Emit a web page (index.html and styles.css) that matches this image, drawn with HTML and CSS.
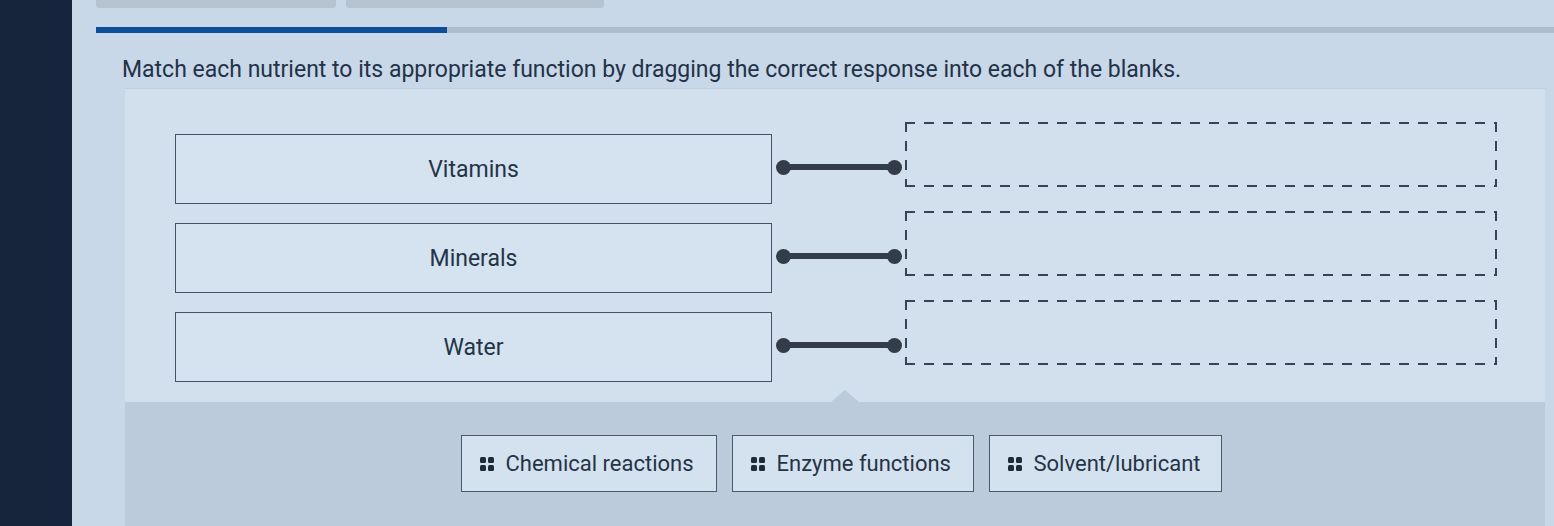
FILE: index.html
```html
<!DOCTYPE html>
<html lang="en">
<head>
<meta charset="utf-8">
<title>Match nutrients</title>
<link rel="stylesheet" href="styles.css">
</head>
<body>
<div class="app">
  <aside class="sidebar"></aside>
  <main class="main">
    <div class="tabs">
      <div class="tab tab-a"></div>
      <div class="tab tab-b"></div>
    </div>
    <div class="progress"><div class="progress-fill"></div></div>
    <p class="prompt">Match each nutrient to its appropriate function by dragging the correct response into each of the blanks.</p>
    <section class="panel">
      <div class="pairs">
        <div class="pair">
          <div class="term">Vitamins</div>
          <div class="link"><span class="dot"></span><span class="bar"></span><span class="dot"></span></div>
          <div class="drop"></div>
        </div>
        <div class="pair">
          <div class="term">Minerals</div>
          <div class="link"><span class="dot"></span><span class="bar"></span><span class="dot"></span></div>
          <div class="drop"></div>
        </div>
        <div class="pair">
          <div class="term">Water</div>
          <div class="link"><span class="dot"></span><span class="bar"></span><span class="dot"></span></div>
          <div class="drop"></div>
        </div>
      </div>
      <div class="bank">
        <span class="pointer"></span>
        <div class="chip"><span class="grip"><i></i><i></i><i></i><i></i></span>Chemical reactions</div>
        <div class="chip"><span class="grip"><i></i><i></i><i></i><i></i></span>Enzyme functions</div>
        <div class="chip"><span class="grip"><i></i><i></i><i></i><i></i></span>Solvent/lubricant</div>
      </div>
    </section>
  </main>
</div>
</body>
</html>
```

FILE: styles.css
```css
* { box-sizing: border-box; }
html, body {
  margin: 0;
  height: 100%;
  overflow: hidden;
}
body {
  background: #c8d8e9;
  font-family: Roboto, "Liberation Sans", Arial, sans-serif;
  color: #243447;
}
.app {
  display: flex;
  height: 526px;
}
.sidebar {
  width: 72px;
  flex: none;
  background: #16253b;
}
.main {
  flex: 1;
  padding-left: 24px;
  display: flex;
  flex-direction: column;
}
.tabs {
  display: flex;
  gap: 10px;
  height: 8px;
}
.tab {
  background: #b6c4d2;
  border-radius: 0 0 3px 3px;
}
.tab-a { width: 240px; }
.tab-b { width: 258px; }
.progress {
  margin-top: 19px;
  height: 6px;
  background: #aebccb;
}
.progress-fill {
  width: 351px;
  height: 100%;
  background: #0e4e98;
}
.prompt {
  margin: 24px 0 0 26px;
  font-size: 23px;
  line-height: 26px;
  color: #233246;
}
.panel {
  margin: 5px 9px 0 29px;
  flex: 1;
  background: #d2dfed;
  border-top: 1px solid #bfcddc;
  display: flex;
  flex-direction: column;
}
.pairs {
  padding: 33px 0 20px 50px;
  display: flex;
  flex-direction: column;
  gap: 7px;
}
.pair {
  display: flex;
  align-items: flex-start;
}
.term {
  width: 597px;
  height: 70px;
  margin-top: 12px;
  border: 1.5px solid #445366;
  background: #d5e2ef;
  display: flex;
  align-items: center;
  justify-content: center;
  font-size: 23px;
  color: #243447;
}
.link {
  width: 133px;
  height: 70px;
  margin-top: 10px;
  display: flex;
  align-items: center;
  padding: 0 3px 0 4px;
}
.dot {
  width: 15px;
  height: 15px;
  border-radius: 50%;
  background: #323d49;
  flex: none;
}
.bar {
  flex: 1;
  height: 6px;
  margin: 0 -2px;
  background: #323d49;
}
.drop {
  width: 592px;
  height: 65px;
  background:
    repeating-linear-gradient(90deg, #34455a 0 10px, transparent 10px 19px) top left / 100% 2px no-repeat,
    repeating-linear-gradient(90deg, #34455a 0 10px, transparent 10px 19px) bottom left / 100% 2px no-repeat,
    repeating-linear-gradient(180deg, #34455a 0 10px, transparent 10px 19px) top left / 2px 100% no-repeat,
    repeating-linear-gradient(180deg, #34455a 0 10px, transparent 10px 19px) top right / 2px 100% no-repeat;
}
.bank {
  position: relative;
  flex: 1;
  background: #bccbdb;
  display: flex;
  justify-content: center;
  align-items: flex-start;
  gap: 15px;
  padding-top: 33px;
  padding-left: 12px;
}
.pointer {
  position: absolute;
  top: -12px;
  left: 706px;
  width: 0;
  height: 0;
  border-left: 14px solid transparent;
  border-right: 14px solid transparent;
  border-bottom: 12px solid #bccbdb;
}
.chip {
  flex: none;
  height: 57px;
  padding: 0 14px 0 18px;
  border: 1.5px solid #4a596b;
  background: #d4e1ee;
  display: flex;
  align-items: center;
  gap: 12px;
  font-size: 22px;
  white-space: nowrap;
  color: #243447;
}
.chip:nth-child(2) { width: 256px; }
.chip:nth-child(3) { width: 242px; }
.chip:nth-child(4) { width: 233px; }
.grip {
  flex: none;
  display: grid;
  grid-template-columns: 6px 6px;
  gap: 2px;
}
.grip i {
  width: 6px;
  height: 6px;
  border-radius: 1.5px;
  background: #1f2b38;
}
```
